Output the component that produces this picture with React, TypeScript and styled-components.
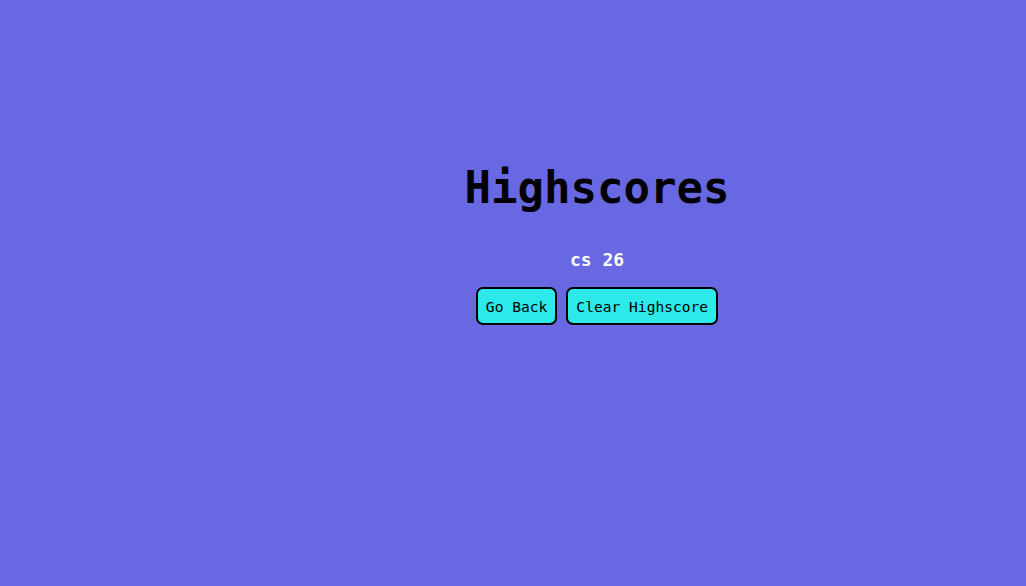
import React from "react";
import styled, { createGlobalStyle } from "styled-components";

const Global = createGlobalStyle`
  html, body { margin: 0; padding: 0; background: #6868e2; }
  body { font-family: "DejaVu Sans Mono", monospace; }
`;

const Page = styled.div`
  min-height: 586px;
  box-sizing: border-box;
  padding: 160px 0 0 168px;
  display: flex;
  flex-direction: column;
  align-items: center;
`;

const Title = styled.h1`
  margin: 0;
  font-size: 44px;
  font-weight: bold;
  color: #000;
  line-height: 56px;
`;

const Score = styled.div`
  margin-top: 32px;
  font-size: 18px;
  font-weight: bold;
  color: #fff;
  line-height: 24px;
`;

const Actions = styled.div`
  margin-top: 15px;
  display: flex;
  gap: 9px;
`;

const Button = styled.button`
  height: 38px;
  padding: 0 8px;
  background: #2de9ea;
  border: 2px solid #000;
  border-radius: 7px;
  font-family: "DejaVu Sans Mono", monospace;
  font-size: 14.6px;
  color: #000;
  cursor: pointer;
`;

export default function App() {
  return (
    <>
      <Global />
      <Page>
        <Title>Highscores</Title>
        <Score>cs 26</Score>
        <Actions>
          <Button>Go Back</Button>
          <Button>Clear Highscore</Button>
        </Actions>
      </Page>
    </>
  );
}
